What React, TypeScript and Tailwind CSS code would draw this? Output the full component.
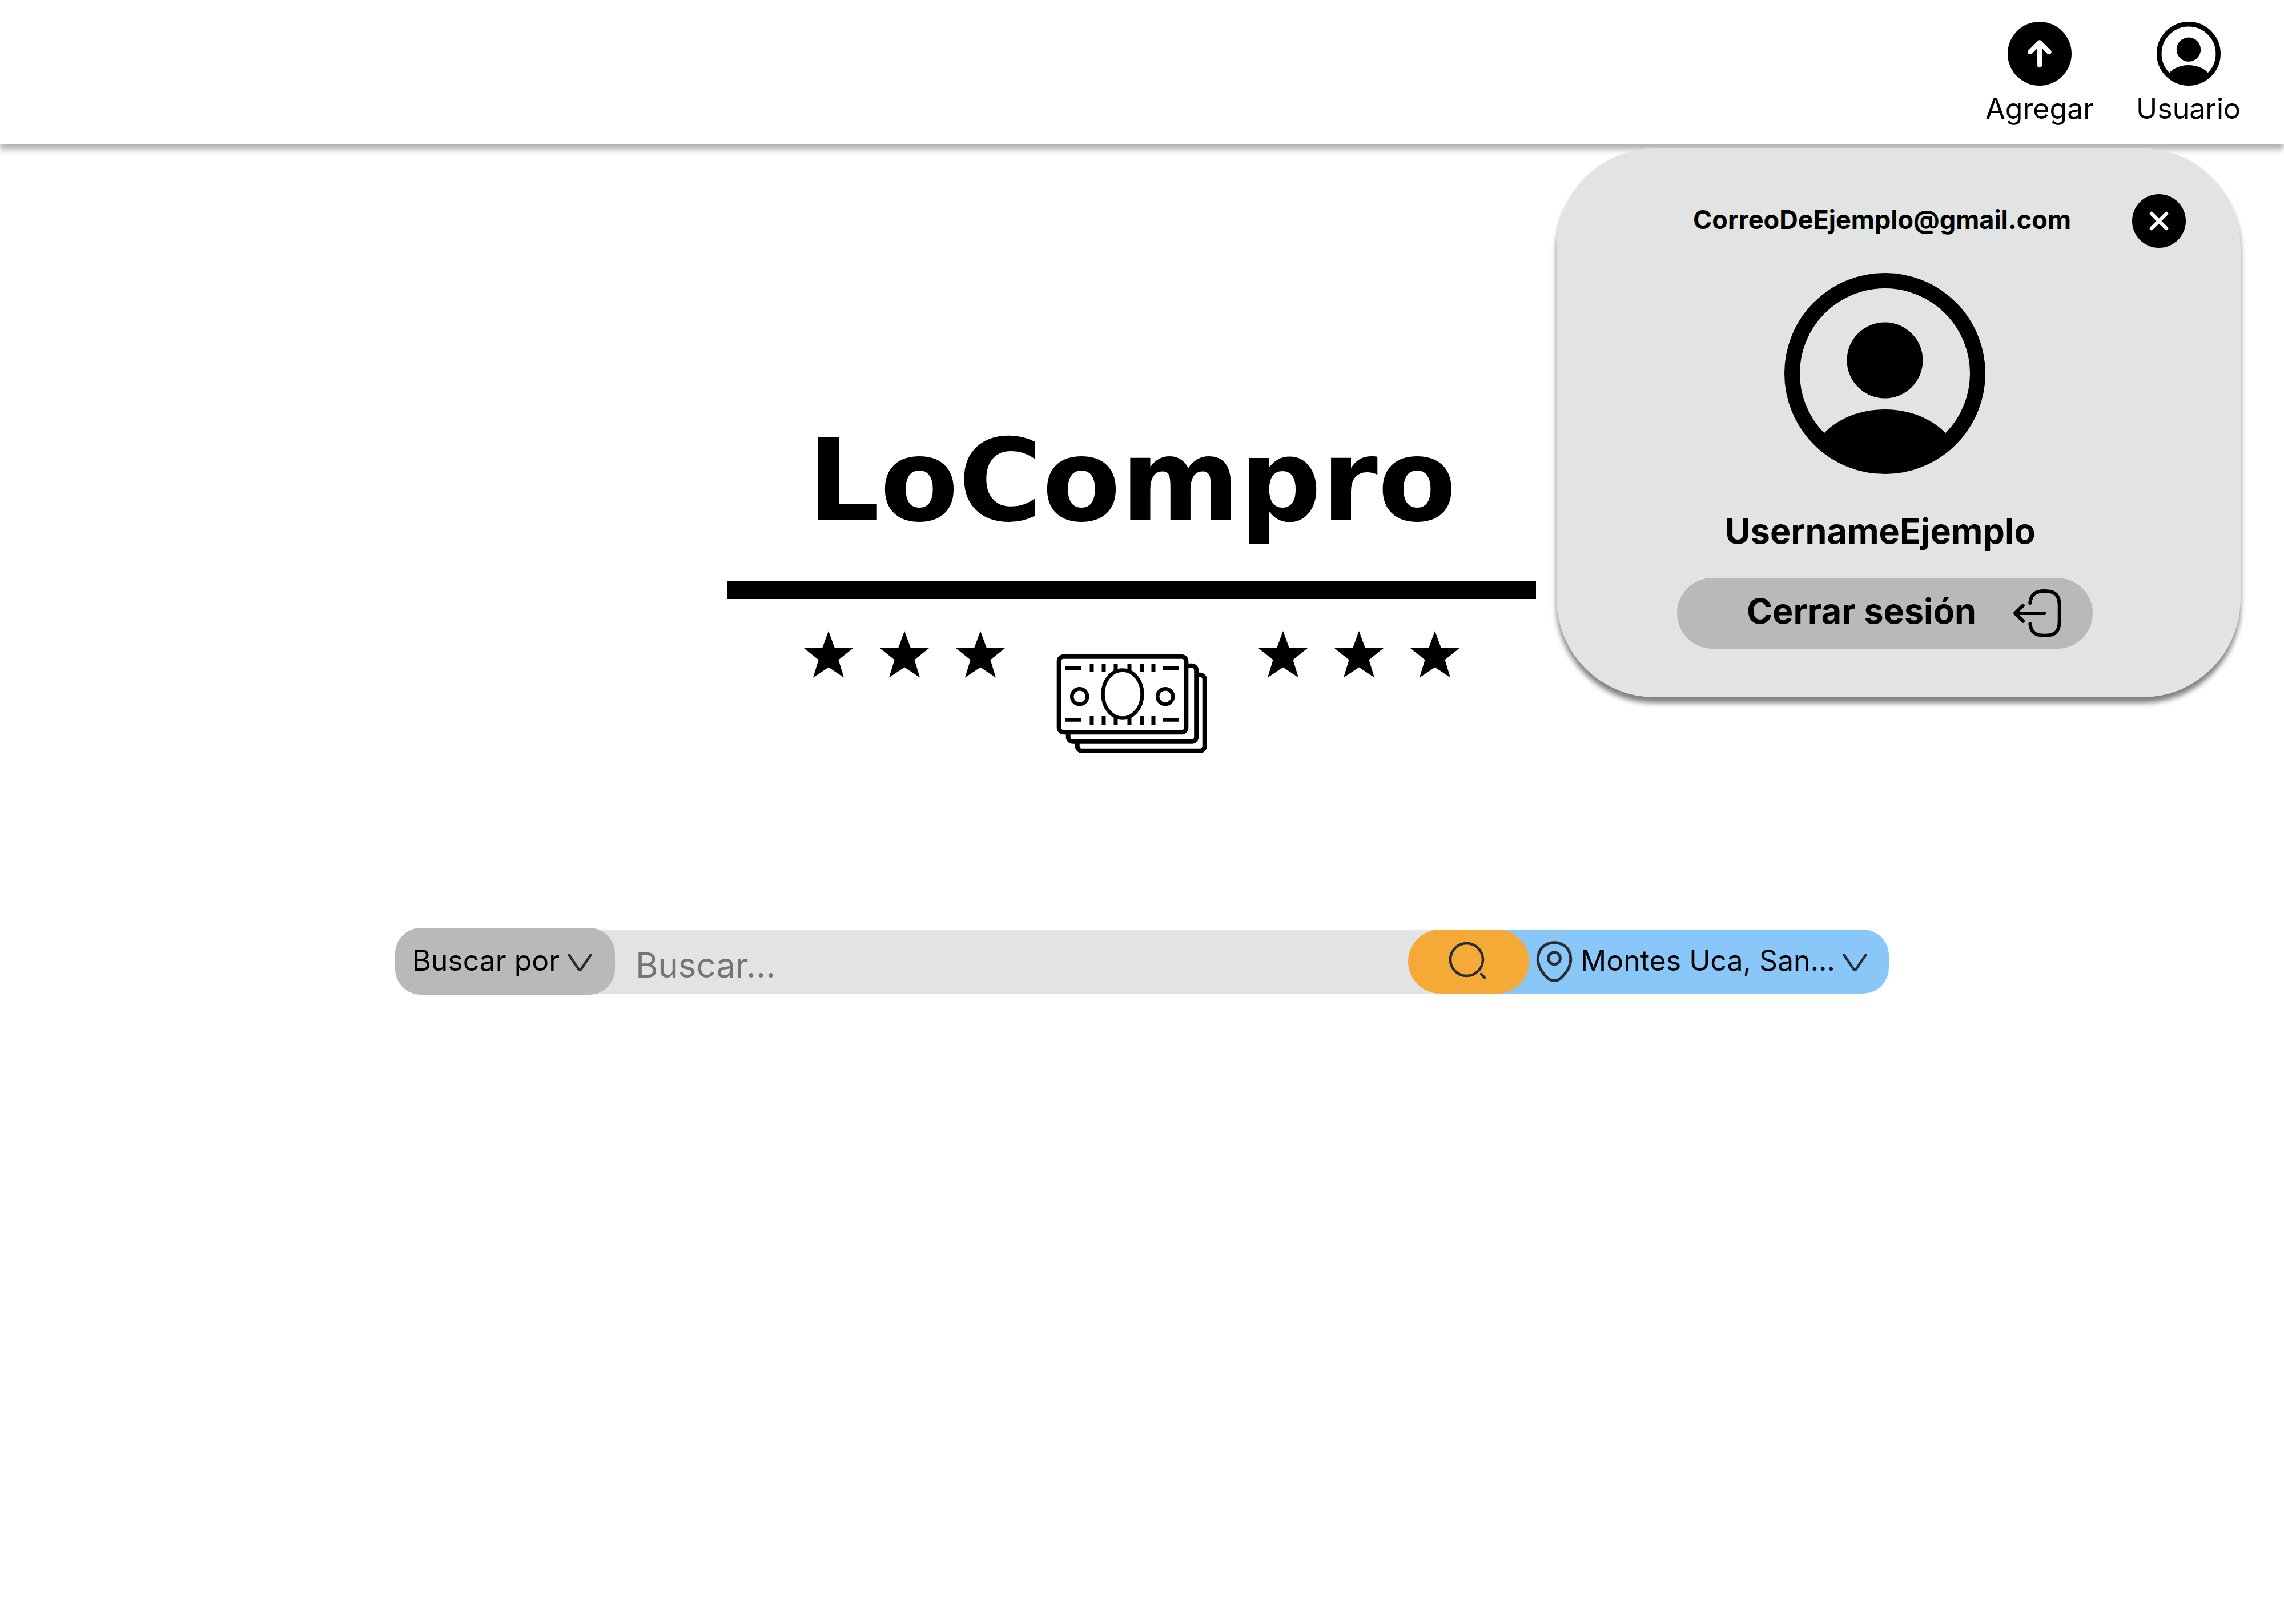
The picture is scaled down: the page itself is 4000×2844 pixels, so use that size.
import React from "react";

function UserIcon({ className }: { className: string }) {
  return (
    <svg viewBox="0 0 352 352" className={className} aria-hidden="true">
      <circle cx="176" cy="176" r="162.5" fill="none" stroke="#000" strokeWidth="27" />
      <circle cx="176" cy="153" r="66.5" />
      <path d="M69.5 280.5C95 254 134 239 176 239S257 254 282.5 280.5L290 300A168 168 0 0 1 62 300Z" />
    </svg>
  );
}

function UploadIcon() {
  return (
    <svg viewBox="0 0 112 112" className="size-28" aria-hidden="true">
      <circle cx="56" cy="56" r="56" />
      <path d="M56 76V37M39.500 53L56 36.500L72.500 53" fill="none" stroke="#fff" strokeWidth="8.500" strokeLinecap="round" strokeLinejoin="round" />
    </svg>
  );
}

function CloseIcon() {
  return (
    <svg viewBox="0 0 94 94" className="size-[94px]" aria-hidden="true">
      <circle cx="47" cy="47" r="47" />
      <path d="M34 34L60 60M60 34L34 60" fill="none" stroke="#fff" strokeWidth="6.500" strokeLinecap="round" />
    </svg>
  );
}

function LogoutIcon() {
  return (
    <svg viewBox="0 0 24 24" className="size-[98px]" fill="none" stroke="#000" strokeWidth="1.5" strokeLinecap="round" strokeLinejoin="round" aria-hidden="true">
      <path d="M8.900 7.560C9.210 3.960 11.060 2.490 15.110 2.490H15.240C19.710 2.490 21.500 4.280 21.500 8.750V15.270C21.500 19.740 19.710 21.530 15.240 21.530H15.110C11.090 21.530 9.240 20.080 8.910 16.540" />
      <path d="M15 12H3.620" />
      <path d="M5.850 8.650L2.500 12L5.850 15.350" />
    </svg>
  );
}

function Chevron() {
  return (
    <svg viewBox="0 0 43 32" className="pointer-events-none mt-1 h-8 w-[43px] shrink-0" aria-hidden="true">
      <path d="M2.500 2.500L19.500 27.500Q21.500 30.500 23.500 27.500L40.500 2.500" fill="none" stroke="#292d32" strokeWidth="4.500" strokeLinecap="round" />
    </svg>
  );
}

function SearchIcon() {
  return (
    <svg viewBox="0 0 24 24" className="size-[72px]" fill="none" stroke="#292d32" strokeWidth="1.5" strokeLinecap="round" aria-hidden="true">
      <circle cx="11.500" cy="11.500" r="9.500" />
      <path d="M22 22L20 20" />
    </svg>
  );
}

function PinIcon() {
  return (
    <svg viewBox="0 0 24 24" className="size-20 shrink-0" fill="none" stroke="#292d32" strokeWidth="1.5" aria-hidden="true">
      <circle cx="12" cy="10.310" r="3.120" />
      <path d="M3.620 8.490C5.590-.17 18.420-.16 20.380 8.500C21.530 13.580 18.370 17.880 15.600 20.540A5.193 5.193 0 0 1 8.390 20.540C5.630 17.880 2.470 13.570 3.620 8.490Z" />
    </svg>
  );
}

function Stars() {
  return (
    <div className="flex gap-[47px]">
      {[0, 1, 2].map((i) => (
        <svg key={i} viewBox="0 0 86 82" className="h-[82px] w-[86px]" aria-hidden="true">
          <path d="M43 0L54 30H86L60.500 50.500L70 81.500L43 63.500L16 81.500L25.500 50.500L0 30H32Z" />
        </svg>
      ))}
    </div>
  );
}

function BanknotesIcon() {
  const ticks = [64, 85, 106, 130, 152, 172];
  return (
    <svg viewBox="0 0 268 180" className="mt-[38px] h-[180px] w-[268px]" fill="none" stroke="#000" strokeWidth="8" aria-hidden="true">
      <rect x="38.700" y="38.700" width="223" height="133" rx="8" fill="#fff" />
      <rect x="22.700" y="22.700" width="224.500" height="133" rx="8" fill="#fff" />
      <rect x="6.700" y="6.700" width="222.600" height="132.600" rx="8" fill="#fff" />
      <ellipse cx="118" cy="72.500" rx="34.500" ry="42" strokeWidth="6.500" />
      <circle cx="42.700" cy="76.700" r="13.500" strokeWidth="6.500" />
      <circle cx="192.700" cy="76.700" r="13.500" strokeWidth="6.500" />
      <path d="M18 27H46M188 27H216M18 117.500H46M188 117.500H216" strokeWidth="6.500" />
      {ticks.map((x) => (
        <path key={x} d={`M${x} 19V34M${x} 111V126`} strokeWidth="7" />
      ))}
    </svg>
  );
}

function Header() {
  return (
    <header className="flex justify-end gap-[74px] bg-white pt-[38px] pr-[76px] pb-8 text-[50px] leading-[60px] shadow-[0_10px_10px_rgba(0,0,0,0.3)]">
      <button type="button" className="flex flex-col items-center gap-2.5">
        <UploadIcon />
        Agregar
      </button>
      <button type="button" className="flex flex-col items-center gap-2.5">
        <UserIcon className="size-28" />
        Usuario
      </button>
    </header>
  );
}

function UserPanel() {
  return (
    <section
      aria-label="Usuario"
      className="absolute top-2 right-[76px] w-[1198px] rounded-[172px] bg-[#e1e4e2] pt-20 pb-[85px] shadow-[0_10px_10px_rgba(0,0,0,0.5)]"
    >
      <div className="flex items-center pr-24 pl-[132px]">
        <p className="flex-1 pb-1 text-center text-[45px] leading-[52px] font-bold">CorreoDeEjemplo@gmail.com</p>
        <button type="button" aria-label="Cerrar">
          <CloseIcon />
        </button>
      </div>
      <div className="flex flex-col items-center pt-11 pr-12 text-[61px] leading-[72px] font-bold">
        <UserIcon className="size-[352px]" />
        <h2 className="mt-16 pr-4">UsernameEjemplo</h2>
        <button
          type="button"
          className="mt-[46px] flex h-[124px] w-[728px] items-center justify-between rounded-full bg-[#bab9b8] pr-12 pl-[122px]"
        >
          <span className="pb-2">Cerrar sesión</span>
          <LogoutIcon />
        </button>
      </div>
    </section>
  );
}

function Logo() {
  return (
    <div className="flex flex-col items-center pr-9">
      <h1 className="font-['DejaVu_Sans',sans-serif] text-[200px] leading-none font-bold">LoCompro</h1>
      <div className="mt-[76px] h-[31px] w-[1416px] bg-black" />
      <div className="mt-14 flex items-start gap-[88px]">
        <Stars />
        <BanknotesIcon />
        <Stars />
      </div>
    </div>
  );
}

function SearchBar() {
  return (
    <form className="mt-[302px] flex w-full max-w-[2616px] items-center text-[50px] leading-[60px]">
      <div className="relative z-10 flex h-[117px] w-[385px] shrink-0 items-center rounded-[45px] bg-[#bab9b8] pr-10 pl-[30px]">
        <select aria-label="Buscar por" className="min-w-0 flex-1 appearance-none bg-transparent pb-1">
          <option>Buscar por</option>
        </select>
        <Chevron />
      </div>
      <input
        type="text"
        aria-label="Buscar"
        placeholder="Buscar..."
        className="-ml-12 h-28 min-w-0 flex-1 bg-[#e1e4e2] pt-3 pl-[84px] text-[60px] placeholder:text-[#757575]"
      />
      <button
        type="submit"
        aria-label="Buscar"
        className="relative z-10 -ml-14 flex h-28 w-[212px] shrink-0 items-center justify-center rounded-full bg-[#f5a936] pr-1 pb-1"
      >
        <SearchIcon />
      </button>
      <div className="-ml-14 flex h-28 w-[686px] shrink-0 items-center gap-1.5 rounded-r-[45px] bg-[#89c7f9] pr-[38px] pl-[60px]">
        <PinIcon />
        <select aria-label="Ubicación" className="min-w-0 flex-1 appearance-none bg-transparent pb-1">
          <option>Montes Uca, San...</option>
        </select>
        <Chevron />
      </div>
    </form>
  );
}

export default function App() {
  return (
    <div className="min-h-screen bg-white font-['Inter',sans-serif] text-black">
      <Header />
      <main className="relative flex flex-col items-center pt-[490px]">
        <Logo />
        <SearchBar />
        <UserPanel />
      </main>
    </div>
  );
}
